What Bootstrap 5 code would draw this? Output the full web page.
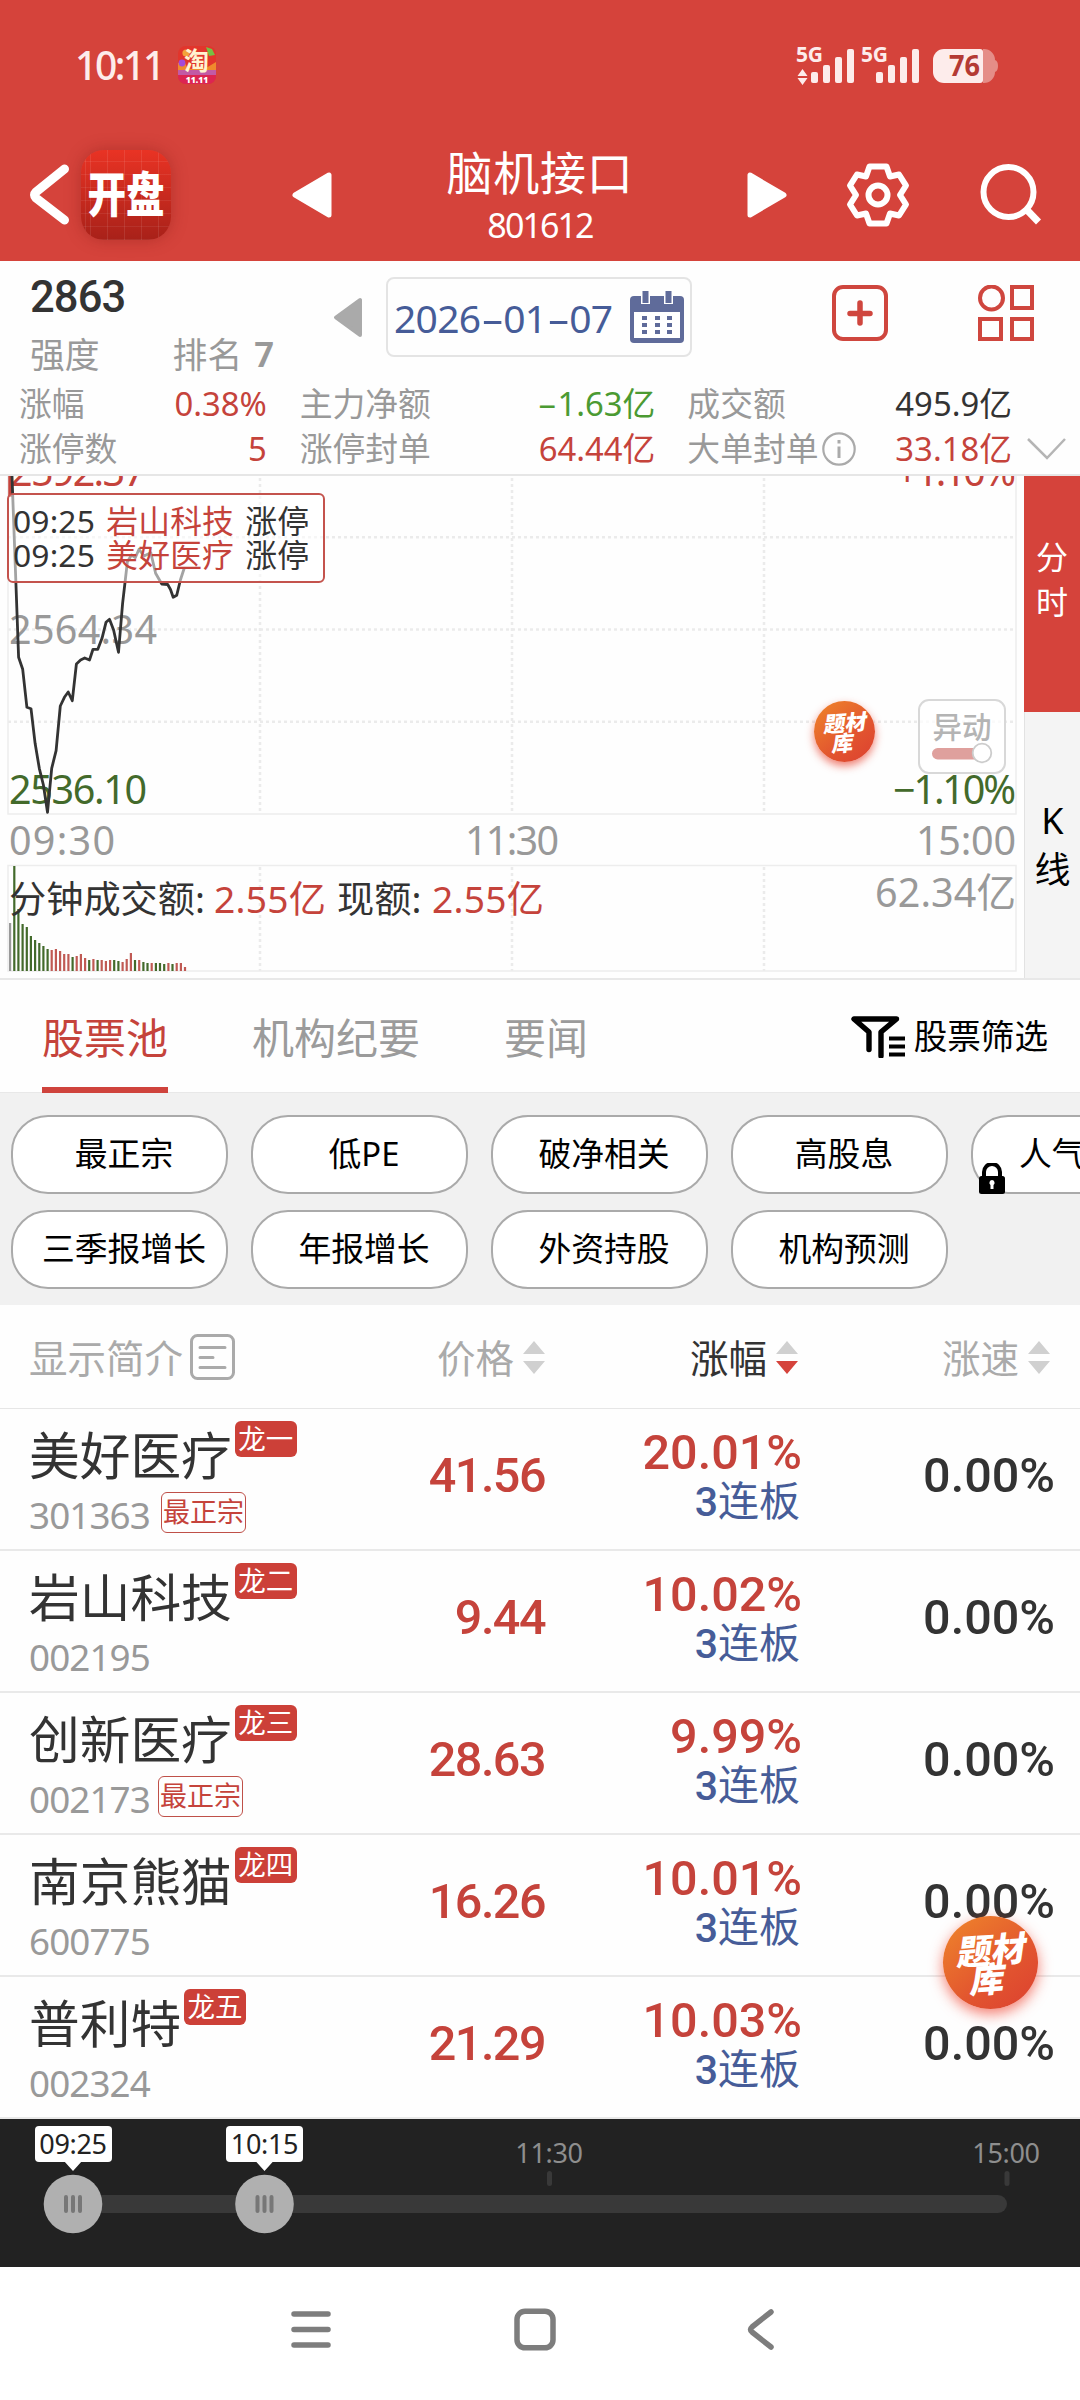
<!DOCTYPE html>
<html lang="zh-CN">
<head>
<meta charset="utf-8">
<meta name="viewport" content="width=device-width, initial-scale=1">
<title>脑机接口 801612</title>
<link rel="stylesheet" href="https://cdn.jsdelivr.net/npm/bootstrap@5.3.0/dist/css/bootstrap.min.css">
<style>
  :root { --app-red:#d5433b; --ink:#333; --up:#c5433b; --down:#4b9a32; --muted:#999; --navy:#465c98; }
  body { width:1080px; height:2400px; overflow:hidden; margin:0; background:#fefefe; color:var(--ink);
    font-family:"Noto Sans","Noto Sans CJK SC",sans-serif; line-height:1; }
  svg { display:block; flex:none; }
  .din { font-family:Roboto,"Noto Sans CJK SC",sans-serif; font-weight:500; }
  .t-up { color:var(--up); } .t-down { color:var(--down); } .t-muted { color:var(--muted); }
  .dash { display:inline-block; transform:scaleX(1.85); margin:0 .14em; }

  .app-head { height:261px; background:var(--app-red); color:#fff; }
  .status-row { height:130px; padding:0 80px 0 75px; color:#fdeceb; }
  .clock { width:103px; font-size:39px; font-weight:500; letter-spacing:-2.4px; line-height:50px; }
  .title-row { height:129px; }
  .app-logo { width:90px; height:90px; border-radius:23px; margin-left:11px; background:
      repeating-linear-gradient(90deg,rgba(255,255,255,.09) 0 1px,transparent 1px 17px) 9px 0,
      repeating-linear-gradient(0deg,rgba(255,255,255,.07) 0 1px,transparent 1px 13px),
      linear-gradient(#e93324,#a82119); box-shadow:0 0 16px rgba(120,20,15,.35); }
  .app-logo span { font-size:38.5px; font-weight:900; transform:scaleY(1.24); line-height:44px; margin-top:-4px; }
  .page-title { width:190px; margin-left:112px; }
  .page-title h1 { font-size:46px; font-weight:400; letter-spacing:.8px; line-height:60px; }
  .page-title small { font-size:34px; line-height:44px; letter-spacing:-1.9px; margin-top:1px; padding-right:0; }

  .summary { height:215px; border-bottom:2px solid #e6e6e6; }
  .summary-top { height:121px; }
  .strength { width:301px; padding-left:30px; }
  .strength .score { font-size:43.5px; line-height:52px; margin-top:11px; letter-spacing:-.9px; }
  .strength .rank { font-size:34.8px; line-height:48px; margin-top:7px; }
  .date-box { width:306px; height:80px; margin:16px 0 0 23px; padding:0 6px 0 6px; border:2px solid #e4e4e4; border-radius:8px; }
  .date-box span.day { font-size:39px; color:var(--navy); white-space:nowrap; letter-spacing:-.7px; }
  .figures { height:92px; padding:0 68px 0 19px; font-size:32.8px; }
  .figures > div { line-height:44.6px; white-space:nowrap; }

  .chart-wrap { height:504px; border-bottom:2px solid #e8e8e8; }
  .side-tabs { width:56px; }
  .side-tabs .on { height:236px; background:var(--app-red); color:#fff; font-size:32px; line-height:45px; padding-top:17px; }
  .side-tabs .off { background:#f4f4f4; border-left:1px solid #e2e2e2; color:#000; font-size:36px; line-height:49px; }
  .alert-pop { left:7px; top:17px; width:318px; height:90px; border:2px solid #c4534d; border-radius:6px; background:rgba(255,255,255,.55);
    font-size:31.8px; line-height:34.3px; padding:9px 0 0 4px; white-space:pre; word-spacing:2.8px; letter-spacing:.15px; }
  .move-toggle { left:918px; top:223px; width:88px; height:75px; border:2px solid #d8d8d8; border-radius:11px; background:rgba(255,255,255,.72);
    color:#b4b4b4; font-size:29.5px; font-weight:500; line-height:32px; padding-top:10px; }
  .topic-ball { border-radius:50%; color:#fff; background:linear-gradient(140deg,#ec7a2c 15%,#e2552f 60%,#dc4030); font-weight:900; text-align:center; }
  .topic-ball span { display:block; transform:rotate(-4deg) skewX(-12deg); white-space:pre; }
  .ball-sm { left:814px; top:225px; width:61px; height:61px; font-size:21.5px; line-height:20px; padding-top:12px; box-shadow:0 4px 9px rgba(232,60,40,.65); }
  .ball-lg { left:943px; top:1916px; width:95px; height:93px; font-size:34.5px; line-height:29px; padding-top:19px; box-shadow:0 5px 14px rgba(240,60,40,.65); }

  .pool-tabs { height:113px; border-bottom:1px solid #e8e8e8; padding:0 32px 0 42px; }
  .pool-tabs .nav-link { padding:0; font-size:42px; color:#9b9b9b; line-height:115px; height:113px; margin-right:84px; }
  .pool-tabs .nav-link.active { color:var(--up); box-shadow:inset 0 -6px 0 #cf433c; }
  .filters { height:212px; background:#f1f1f1; padding:22px 0 0 11px; gap:16px; }
  .filters .d-flex { gap:23px; }
  .pill { flex:none; width:217px; height:79px; border:2px solid #aaa; border-radius:37px; background:#fff; color:#000; font-size:32.8px;
    padding:0 0 0 9px; white-space:nowrap; }
  .lock { left:6px; bottom:-2px; }

  .list-head { height:104px; font-size:38.5px; color:#aaa; border-bottom:1px solid #e6e6e6; padding-top:3px; }
  .stock { height:142px; border-bottom:2px solid #e9e9e9; }
  .c-name { width:400px; padding-left:29px; }
  .c-price { width:145px; } .c-pct { width:257px; } .c-speed { width:253px; }
  .stock .num { font-size:48.5px; line-height:50px; }
  .stock .c-price.num { letter-spacing:-1.5px; padding-right:0; }
  .c-price.num, .c-speed.num { padding-bottom:6px; }
  .stock .streak { font-size:41px; line-height:48px; color:var(--navy); padding-right:2px; margin-top:-2px; }
  .sname { font-size:50.7px; line-height:60px; margin-top:17px; white-space:nowrap; }
  .dragon { margin:12px 0 0 3px; width:62px; height:36px; border-radius:6px; background:#cc4038; color:#fff; font-size:27.5px; line-height:36px; }
  .code { font-size:36.8px; line-height:48px; letter-spacing:-.9px; padding-top:5px; }
  .tag { width:85px; height:41px; border:1.5px solid #bf5049; border-radius:6px; color:var(--up); font-size:27px; line-height:38px; margin:-1px 0 0 11px; }
  .tag.near { margin-left:8px; }

  .timebar { height:148px; background:#222; font-size:27px; letter-spacing:-.3px; }
  .timebar > * { position:absolute; }
  .tip { top:7px; width:77px; height:36px; border-radius:4px; background:#fff; color:#222; line-height:36px; text-align:center; }
  .tick-label { top:18px; width:80px; text-align:center; color:#8e8e8e; line-height:32px; }
  .sys-nav { height:133px; background:#fff; padding:0 305px 7px 290px; }
</style>
<script src="https://cdn.jsdelivr.net/npm/bootstrap@5.3.0/dist/js/bootstrap.bundle.min.js"></script>
</head>
<body class="position-relative">

<header class="app-head">
  <div class="status-row d-flex align-items-center">
    <span class="clock">10:11</span>
    <svg width="38" height="38" viewBox="0 0 38 38">
      <rect width="38" height="38" rx="8" fill="#e2352c"/>
      <path d="M0 17l6-2 4 8 18-1 10-6v13H0z" fill="#f08a2d"/><path d="M0 24h38v5H0z" fill="#c25aa5"/>
      <circle cx="8" cy="7" r="3.600" fill="#f3a33a"/><circle cx="4" cy="17" r="3.400" fill="#a44ad8"/>
      <path d="M28 1l6 2 3 6-6 1z" fill="#76c043"/>
      <path d="M0 29h38v1a8 8 0 0 1-8 8H8a8 8 0 0 1-8-8z" fill="#dc2552"/>
      <text x="18.500" y="23.500" font-size="25" font-weight="700" text-anchor="middle" fill="#fff3d0">淘</text>
      <text x="19" y="36.500" font-size="8.500" font-weight="900" text-anchor="middle" fill="#fff">11.11</text>
    </svg>
    <svg class="ms-auto" width="205" height="44" viewBox="795 42 205 44" fill="#fdeceb">
      <g font-size="21" font-weight="700"><text x="796" y="61" textLength="27">5G</text><text x="861" y="61" textLength="27">5G</text></g>
      <path d="M802.5 68l5 7h-10zM802.5 84l5-7h-10z"/>
      <rect x="811" y="71" width="7" height="11" rx="2"/><rect x="823" y="64" width="7" height="18" rx="2"/><rect x="835" y="56" width="7" height="26" rx="2"/><rect x="847" y="48" width="7" height="34" rx="2"/>
      <rect x="876" y="71" width="7" height="11" rx="2"/><rect x="888" y="64" width="7" height="18" rx="2"/><rect x="900" y="56" width="7" height="26" rx="2"/><rect x="912" y="48" width="7" height="34" rx="2"/>
      <path d="M983 48h1a11 11 0 0 1 11 11q3 1 3 6t-3 6a11 11 0 0 1-11 11h-1z" fill="#e58d87"/>
      <path d="M944 48h36q3 0 3 3v28q0 3-3 3h-36a11 11 0 0 1-11-11V59a11 11 0 0 1 11-11z"/>
      <text x="949" y="75" font-size="28" font-weight="700" fill="#b43a34" textLength="31" lengthAdjust="spacingAndGlyphs">76</text>
    </svg>
  </div>
  <div class="title-row d-flex align-items-center">
    <svg width="45" height="64" style="margin-left:25px" viewBox="25 162 45 64" fill="none" stroke="#fff" stroke-width="9" stroke-linecap="round" stroke-linejoin="round"><path d="M64.500 168L36 191q-3 3 0 6l28.500 22"/></svg>
    <div class="app-logo d-flex align-items-center justify-content-center"><span>开盘</span></div>
    <svg style="margin-left:120px" width="42" height="48" viewBox="0 0 42 48"><path d="M38 4v40L4 24z" fill="#fff" stroke="#fff" stroke-width="5" stroke-linejoin="round"/></svg>
    <div class="page-title text-center text-nowrap"><h1 class="m-0">脑机接口</h1><small class="d-block">801612</small></div>
    <svg style="margin-left:111px" width="42" height="48" viewBox="0 0 42 48"><path d="M4 4v40l34-20z" fill="#fff" stroke="#fff" stroke-width="5" stroke-linejoin="round"/></svg>
    <svg style="margin-left:58px" width="64" height="66" viewBox="-32 -33 64 66" fill="none" stroke="#fff" stroke-width="6" stroke-linejoin="round">
      <path d="M-8.500-28.500H8.500L12-18.500L21-20.500L28-9.500L22 0L28 9.500L21 20.500L12 18.500L8.500 28.500H-8.500L-12 18.500L-21 20.500L-28 9.500L-22 0L-28-9.500L-21-20.500L-12-18.500Z"/><circle r="9.500"/></svg>
    <svg style="margin-left:69px" width="64" height="64" viewBox="980 162 64 64" fill="none" stroke="#fff"><circle cx="1009.500" cy="191" r="25" stroke-width="6"/><path d="M1027 208l12.500 13" stroke-width="7"/></svg>
  </div>
</header>

<section class="summary">
  <div class="summary-top d-flex">
    <div class="strength">
      <div class="score din">2863</div>
      <div class="rank t-muted d-flex"><span>强度</span><span style="margin-left:73px">排名</span><b class="din ms-2 ps-1" style="font-weight:700">7</b></div>
    </div>
    <svg style="margin:36px 0 0 31px" width="31" height="41" viewBox="0 0 31 41"><path d="M28 3v35L4 20.500z" fill="#aaa" stroke="#aaa" stroke-width="4" stroke-linejoin="round"/></svg>
    <div class="date-box d-flex align-items-center justify-content-between">
      <span class="day">2026<span class="dash">-</span>01<span class="dash">-</span>07</span>
      <svg width="54" height="52" viewBox="0 0 54 52" fill="#5f6b9a"><path d="M4 5h46a4 4 0 0 1 4 4v39a4 4 0 0 1-4 4H4a4 4 0 0 1-4-4V9a4 4 0 0 1 4-4z"/><path fill="#fff" d="M4 21h46v26H4zM11 0h9v13h-9zM34 0h9v13h-9z"/><path d="M12.500 0h6v12h-6zM35.500 0h6v12h-6zM12 25h5v4h-5zM25 25h5v4h-5zM37 25h5v4h-5zM12 32h5v4h-5zM25 32h5v4h-5zM37 32h5v4h-5zM12 39h5v4h-5zM25 39h5v4h-5zM37 39h5v4h-5z"/></svg>
    </div>
    <svg style="margin:24px 0 0 140px" width="56" height="56" viewBox="0 0 56 56" fill="none" stroke="#cf463e"><rect x="2" y="2" width="52" height="52" rx="9" stroke-width="4"/><path d="M28 18v20M18 28.500h20" stroke-width="5.500" stroke-linecap="round"/></svg>
    <svg style="margin:24px 0 0 90px" width="56" height="56" viewBox="0 0 56 56" fill="none" stroke="#cf463e" stroke-width="4"><circle cx="13.500" cy="13" r="11.500"/><rect x="34" y="2" width="20" height="21"/><rect x="2" y="34" width="21" height="20"/><rect x="34" y="34" width="20" height="20"/></svg>
  </div>
  <div class="figures d-flex position-relative">
    <div style="width:248px">
      <div class="d-flex justify-content-between"><span class="t-muted">涨幅</span><span class="t-up">0.38%</span></div>
      <div class="d-flex justify-content-between"><span class="t-muted">涨停数</span><span class="t-up">5</span></div>
    </div>
    <div style="width:356px;margin-left:33px">
      <div class="d-flex justify-content-between"><span class="t-muted">主力净额</span><span class="t-down"><span class="dash">-</span>1.63亿</span></div>
      <div class="d-flex justify-content-between"><span class="t-muted">涨停封单</span><span class="t-up">64.44亿</span></div>
    </div>
    <div style="width:325px;margin-left:32px">
      <div class="d-flex justify-content-between"><span class="t-muted">成交额</span><span>495.9亿</span></div>
      <div class="d-flex"><span class="t-muted">大单封单</span>
        <svg style="margin:4px 0 0 3px" width="34" height="36" viewBox="0 0 34 36" fill="none" stroke="#aaa" stroke-width="2.200"><circle cx="17" cy="18" r="15.700"/><path d="M17 15.500V27M17 9v3.500" stroke-width="3"/></svg>
        <span class="t-up ms-auto">33.18亿</span></div>
    </div>
    <svg class="position-absolute" style="left:1027px;top:55px" width="40" height="24" viewBox="0 0 40 24" fill="none" stroke="#b5b5b5" stroke-width="2.500"><path d="M1 2l19 19L38 2"/></svg>
  </div>
</section>

<section class="chart-wrap d-flex position-relative">
  <svg width="1024" height="502" viewBox="0 476 1024 502" id="chart">
    <g stroke="#ebebeb" stroke-width="2.500" stroke-dasharray="3 3">
      <path d="M8 537.300H1016M8 629.500H1016M8 721.700H1016M260 478V813M512 478V813M764 478V813M260 867V971M512 867V971M764 867V971"/>
    </g>
    <path d="M8 476V814H1016V476M8 865.500H1016V971H8Z" fill="none" stroke="#ededed" stroke-width="1.500"/>
    <g font-size="39.500">
      <text x="10" y="486" fill="#c5433b" textLength="136">2592.37</text>
      <text x="1016" y="486" fill="#c5433b" text-anchor="end" textLength="120">+1.10%</text>
      <text x="9" y="644" fill="#999" textLength="148">2564.34</text>
      <text x="9" y="803.500" fill="#436a2b" textLength="138">2536.10</text>
      <text x="1016" y="803.500" fill="#436a2b" text-anchor="end" textLength="123">−1.10%</text>
      <text x="9" y="854.500" fill="#999" textLength="106">09:30</text>
      <text x="512" y="854.500" fill="#999" text-anchor="middle" textLength="94">11:30</text>
      <text x="1016" y="854.500" fill="#999" text-anchor="end" textLength="100">15:00</text>
      <text x="1016" y="906.500" fill="#999" text-anchor="end" textLength="141">62.34亿</text>
    </g>
    <g id="bars"></g>
    <g font-size="37.200" fill="#333">
      <text x="9" y="912.500">分钟成交额:</text><text x="214" y="912.500" fill="#c5433b" textLength="112">2.55亿</text>
      <text x="337" y="912.500">现额:</text><text x="432" y="912.500" fill="#c5433b" textLength="112">2.55亿</text>
    </g>
    <path d="M10.500 476V497" stroke="#c5433b" stroke-width="4.500"/>
    <path fill="none" stroke="#333" stroke-width="2.800" stroke-linejoin="round" d="M12 476L15.800 580L18.600 657.300L22.700 669.300L26.900 707.300L31 708.700L35.100 743.300L39.300 768.300L43.400 785L47.500 812.300L51.700 768.300L56.100 750.700L60.300 706L64.400 697.300L68.200 692L72.300 700.700L76.400 664L80.600 660L84.700 658L89.500 660L93 649.300L97.800 649.300L102 638.300L106 622.300L109.500 619.300L113.600 630L118.500 652.300L122.600 603.300L125.300 580L127.400 561.700L131.500 555L135.300 557.700L139 549.300L144 556L150.800 552.700L155.600 573.300L161.800 584L167.700 584.500L170.500 589.500L173.200 597.300L176.700 595.300L180.400 580L184.200 568.300"/>
  </svg>
  <div class="side-tabs d-flex flex-column text-center">
    <div class="on d-flex flex-column justify-content-center pb-5"><span>分</span><span>时</span></div>
    <div class="off flex-fill d-flex flex-column justify-content-center"><span>K</span><span>线</span></div>
  </div>
  <div class="alert-pop position-absolute"><div>09:25 <span class="t-up">岩山科技</span> 涨停</div><div>09:25 <span class="t-up">美好医疗</span> 涨停</div></div>
  <div class="topic-ball ball-sm position-absolute"><span>题材
库</span></div>
  <div class="move-toggle position-absolute text-center">异动
    <svg class="mx-auto" style="margin-top:-2px" width="62" height="24" viewBox="0 0 62 24"><rect x="1" y="7" width="50" height="11.500" rx="5.700" fill="#dfa09d"/><circle cx="51" cy="12" r="9.300" fill="#fff" stroke="#ccc" stroke-width="1.800"/></svg>
  </div>
</section>

<nav class="pool-tabs nav d-flex align-items-center flex-nowrap">
  <a class="nav-link active">股票池</a><a class="nav-link">机构纪要</a><a class="nav-link">要闻</a>
  <div class="ms-auto d-flex align-items-center text-black" style="font-size:33.6px;padding-top:2px">
    <svg style="margin:-2px 9px 0 0" width="55" height="43" viewBox="850 1014 55 43" fill="none" stroke="#000" stroke-width="5.400" stroke-linecap="round" stroke-linejoin="round"><path d="M869 1048.500V1031L854 1018H896.500L881 1031V1055"/><path d="M889 1037.500H905M889 1045.500H905M889 1053.500H905" stroke-width="3.800" stroke-linecap="butt"/></svg>
    <span>股票筛选</span>
  </div>
</nav>

<section class="filters d-flex flex-column overflow-hidden">
  <div class="d-flex">
    <span class="pill d-flex align-items-center justify-content-center">最正宗</span>
    <span class="pill d-flex align-items-center justify-content-center">低PE</span>
    <span class="pill d-flex align-items-center justify-content-center">破净相关</span>
    <span class="pill d-flex align-items-center justify-content-center">高股息</span>
    <span class="pill d-flex align-items-center position-relative" style="padding-left:46px">人气
      <svg class="lock position-absolute" width="26" height="31" viewBox="0 0 26 31"><path d="M5 15V9a7.500 7.500 0 0 1 16 0v6" fill="none" stroke="#000" stroke-width="4"/><rect y="13" width="26" height="18" rx="2.500"/><path d="M13 17a2.800 2.800 0 0 1 1.500 5v4h-3v-4a2.800 2.800 0 0 1 1.500-5z" fill="#fff"/></svg>
    </span>
  </div>
  <div class="d-flex">
    <span class="pill d-flex align-items-center justify-content-center">三季报增长</span>
    <span class="pill d-flex align-items-center justify-content-center">年报增长</span>
    <span class="pill d-flex align-items-center justify-content-center">外资持股</span>
    <span class="pill d-flex align-items-center justify-content-center">机构预测</span>
  </div>
</section>

<div class="list-head d-flex align-items-center">
  <div class="c-name d-flex align-items-center">显示简介
    <svg style="margin:-3px 0 0 7px" width="45" height="46" viewBox="0 0 45 46" fill="none" stroke="#aaa" stroke-width="3"><rect x="1.500" y="1.500" width="42" height="43" rx="6"/><path d="M10 13.500h25M10 23.500h13M10 33.500h25" stroke-linecap="round"/></svg></div>
  <div class="c-price d-flex align-items-center justify-content-end">价格<svg style="margin:-2px 0 0 9px" width="22" height="33" viewBox="0 0 22 33" fill="#d0d0d0"><path d="M11 0l11 13H0zM11 33l11-13H0z"/></svg></div>
  <div class="c-pct d-flex align-items-center justify-content-end pe-1" style="color:#333">涨幅<svg style="margin:-2px 0 0 9px" width="22" height="33" viewBox="0 0 22 33"><path d="M11 0l11 13H0z" fill="#d0d0d0"/><path d="M11 33l11-13H0z" fill="#d5433b"/></svg></div>
  <div class="c-speed d-flex align-items-center justify-content-end" style="padding-right:5px">涨速<svg style="margin:-2px 0 0 9px" width="22" height="33" viewBox="0 0 22 33" fill="#d0d0d0"><path d="M11 0l11 13H0zM11 33l11-13H0z"/></svg></div>
</div>

<main id="stocks"></main>

<section class="timebar position-relative">
  <svg style="left:0;top:0" width="1080" height="148" viewBox="0 2119 1080 148">
    <rect x="44" y="2195" width="963" height="18" rx="9" fill="#393939"/>
    <rect x="547" y="2171" width="5" height="15" rx="2.500" fill="#393939"/><rect x="1004.500" y="2171" width="5" height="15" rx="2.500" fill="#393939"/>
    <path d="M64 2161h18l-9 10zM255.500 2161h18l-9 10z" fill="#fff"/>
    <circle cx="73" cy="2204" r="29.300" fill="#b0b0b0"/><circle cx="264.500" cy="2204" r="29.300" fill="#b0b0b0"/>
    <path d="M66 2197v14M73 2197v14M80 2197v14M257.500 2197v14M264.500 2197v14M271.500 2197v14" stroke="#777" stroke-width="4" stroke-linecap="round"/>
  </svg>
  <span class="tip" style="left:34.5px">09:25</span><span class="tip" style="left:226px">10:15</span>
  <span class="tick-label" style="left:509px">11:30</span><span class="tick-label" style="left:966px">15:00</span>
</section>

<footer class="sys-nav d-flex align-items-center">
  <svg width="42" height="44" viewBox="0 0 42 44" stroke="#7d7d7d" stroke-width="5.500" stroke-linecap="round"><path d="M4 6h34M4 21.500h34M4 37h34"/></svg>
  <svg style="margin-left:182px" width="42" height="44" viewBox="0 0 42 44" fill="none" stroke="#7d7d7d" stroke-width="5.500"><rect x="3" y="3.300" width="36" height="36.500" rx="8"/></svg>
  <svg class="ms-auto" width="28" height="44" viewBox="0 0 28 44" fill="none" stroke="#7d7d7d" stroke-width="5.500" stroke-linecap="round" stroke-linejoin="round"><path d="M24 4L5 19q-3 2.500 0 5L24 39"/></svg>
</footer>

<div class="topic-ball ball-lg position-absolute"><span>题材
库</span></div>

<script>
  // Minute turnover bars: height in px and direction (n neutral, g down, r up)
  const turnover = "48n 105g 62g 47g 44g 35g 31g 28g 25g 22g 21r 22r 20r 17r 17r 14g 15r 17r 13r 11g 12r 11g 11r 10r 11r 11g 10g 9r 12r 18r 11g 11r 9g 8g 8r 8g 8g 7g 8r 7g 8r 8r 4r".split(" ");
  const tone = { n:"#999", g:"#436a2b", r:"#c05a54" };
  document.getElementById("bars").innerHTML = turnover.map((s, i) => {
    const h = parseInt(s);
    return `<rect x="${(9 + i * 4.165).toFixed(1)}" y="${971 - h}" width="2.2" height="${h}" fill="${tone[s.slice(-1)]}"/>`;
  }).join("");

  const stocks = [
    ["美好医疗","龙一","301363","tag","41.56","20.01%"],
    ["岩山科技","龙二","002195","","9.44","10.02%"],
    ["创新医疗","龙三","002173","tag near","28.63","9.99%"],
    ["南京熊猫","龙四","600775","","16.26","10.01%"],
    ["普利特","龙五","002324","","21.29","10.03%"]
  ];
  document.getElementById("stocks").innerHTML = stocks.map(([name, rank, code, tag, price, pct]) => `
    <div class="stock d-flex">
      <div class="c-name">
        <div class="d-flex"><span class="sname">${name}</span><span class="dragon text-center">${rank}</span></div>
        <div class="d-flex align-items-center"><span class="code t-muted">${code}</span>${tag ? `<span class="${tag} text-center">最正宗</span>` : ''}</div>
      </div>
      <div class="c-price num din t-up d-flex align-items-center justify-content-end">${price}</div>
      <div class="c-pct text-end" style="padding-top:19px"><div class="num din t-up">${pct}</div><div class="streak"><span class="din">3</span>连板</div></div>
      <div class="c-speed num din d-flex align-items-center justify-content-end">0.00%</div>
    </div>`).join("");
</script>
</body>
</html>
